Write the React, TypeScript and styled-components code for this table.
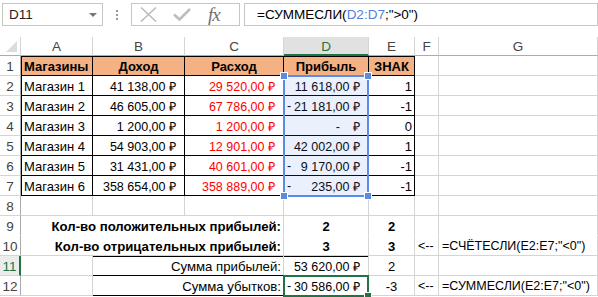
import React from 'react'
import styled, { createGlobalStyle } from 'styled-components'

const GRID = '#d4d4d4'
const INK = '#000'
const GREEN = '#217346'
const SEL = '#5b8be3'
const COLS_TEMPLATE = '21px 72px 92px 99px 85px 46px 24px 159px'
const ROWS_TEMPLATE = '19px repeat(12, 20px)'

const GlobalStyle = createGlobalStyle`
	html, body {
		margin: 0;
		padding: 0;
		background: #fff;
	}
	body {
		width: 598px;
		height: 297px;
		overflow: hidden;
		font-family: 'Liberation Sans', Arial, sans-serif;
		font-size: 12.5px;
		color: #000;
	}
`

const Page = styled.div`
	width: 598px;
	height: 297px;
	overflow: hidden;
`

const TopBar = styled.div`
	display: flex;
	align-items: center;
	height: 23px;
	padding: 3px 0 0 2px;
	margin-bottom: 11px;
`

const NameBox = styled.div`
	box-sizing: border-box;
	display: flex;
	align-items: center;
	justify-content: space-between;
	width: 101px;
	height: 23px;
	padding: 0 5px 0 6px;
	border: 1px solid #c6c6c6;
	font-size: 13.5px;
	color: #222;
`

const Caret = styled.span`
	width: 0;
	height: 0;
	border-left: 4px solid transparent;
	border-right: 4px solid transparent;
	border-top: 4px solid #777;
`

const Grip = styled.div`
	display: flex;
	flex-direction: column;
	gap: 2px;
	margin: 0 13px 0 13px;
	span {
		width: 2px;
		height: 2px;
		background: #9a9a9a;
	}
`

const ButtonBox = styled.div`
	box-sizing: border-box;
	display: flex;
	align-items: center;
	width: 109px;
	height: 23px;
	padding-left: 8px;
	gap: 16px;
	border: 1px solid #c6c6c6;
`

const FxLabel = styled.span`
	font-family: 'Liberation Serif', 'Times New Roman', serif;
	font-style: italic;
	font-size: 19px;
	color: #6f6f6f;
	letter-spacing: -1px;
	margin-left: 1px;
	line-height: 1;
`

const FormulaBox = styled.div`
	box-sizing: border-box;
	flex: 1;
	height: 23px;
	margin-left: 4px;
	padding-left: 12px;
	display: flex;
	align-items: center;
	border: 1px solid #c6c6c6;
	font-size: 13.5px;
	white-space: nowrap;
`

const Ref = styled.span`
	color: #4f81e0;
`

const SheetWrap = styled.div`
	position: relative;
`

const Sheet = styled.div`
	display: grid;
	grid-template-columns: ${COLS_TEMPLATE};
	grid-template-rows: ${ROWS_TEMPLATE};
`

// same grid laid over the sheet, holds only the selection frames
const OverlayLayer = styled.div`
	position: absolute;
	inset: 0;
	display: grid;
	grid-template-columns: ${COLS_TEMPLATE};
	grid-template-rows: ${ROWS_TEMPLATE};
	pointer-events: none;
`

const ColHead = styled.div<{ $active?: boolean }>`
	box-sizing: border-box;
	display: flex;
	align-items: center;
	justify-content: center;
	border-right: 1px solid ${GRID};
	border-bottom: ${(p) => (p.$active ? `2px solid ${GREEN}` : '1px solid #ababab')};
	background: ${(p) => (p.$active ? '#e1e1e1' : '#fff')};
	color: ${(p) => (p.$active ? GREEN : '#444')};
	font-size: 13.5px;
	padding-top: 1px;
`

const Corner = styled.div`
	box-sizing: border-box;
	position: relative;
	border-right: 1px solid ${GRID};
	border-bottom: 1px solid #ababab;
	&::after {
		content: '';
		position: absolute;
		right: 3px;
		bottom: 3px;
		width: 0;
		height: 0;
		border-left: 11px solid transparent;
		border-bottom: 11px solid #dcdcdc;
	}
`

const RowHead = styled.div<{ $active?: boolean; $noLine?: boolean }>`
	box-sizing: border-box;
	display: flex;
	align-items: center;
	justify-content: center;
	border-right: ${(p) => (p.$active ? `2px solid ${GREEN}` : `1px solid #ababab`)};
	border-bottom: 1px solid ${(p) => (p.$noLine ? '#fff' : GRID)};
	background: ${(p) => (p.$active ? '#ececec' : '#fff')};
	color: ${(p) => (p.$active ? GREEN : '#444')};
	font-size: 13.5px;
	padding-top: 1px;
`

type CellProps = {
	$align?: 'left' | 'center' | 'right' | 'between'
	$br?: string
	$bb?: string
	$bl?: boolean
	$bt?: boolean
	$fill?: string
	$color?: string
	$bold?: boolean
	$span?: number
	$pr?: number
	$size?: number
}

const Cell = styled.div<CellProps>`
	box-sizing: border-box;
	display: flex;
	align-items: center;
	justify-content: ${(p) =>
		p.$align === 'right'
			? 'flex-end'
			: p.$align === 'center'
			? 'center'
			: p.$align === 'between'
			? 'space-between'
			: 'flex-start'};
	grid-column: span ${(p) => p.$span || 1};
	padding: 1px ${(p) => (p.$pr === undefined ? 3 : p.$pr)}px 0 3px;
	border-right: 1px solid ${(p) => p.$br || GRID};
	border-bottom: 1px solid ${(p) => p.$bb || GRID};
	box-shadow: ${(p) =>
		[p.$bl ? `inset 1px 0 0 ${INK}` : '', p.$bt ? `inset 0 1px 0 ${INK}` : '']
			.filter(Boolean)
			.join(', ') || 'none'};
	background: ${(p) => p.$fill || 'transparent'};
	color: ${(p) => p.$color || '#000'};
	font-size: ${(p) => p.$size || 12.5}px;
	font-weight: ${(p) => (p.$bold ? 700 : 400)};
	white-space: nowrap;
	overflow: visible;
`

const Range = styled.div`
	grid-column: 5 / 6;
	grid-row: 3 / 9;
	position: relative;
	margin: -1px 0 -1px -1px;
	border: 2px solid ${SEL};
	background: rgba(80, 130, 230, 0.12);
`

const Active = styled.div`
	grid-column: 5 / 6;
	grid-row: 13 / 14;
	position: relative;
	margin: -1px 0 -1px -1px;
	border: 2px solid ${GREEN};
`

const Handle = styled.span<{ $x: 'l' | 'r'; $y: 't' | 'b'; $color: string }>`
	position: absolute;
	${(p) => (p.$x === 'l' ? 'left: -5px;' : 'right: -5px;')}
	${(p) => (p.$y === 't' ? 'top: -5px;' : 'bottom: -5px;')}
	width: 6px;
	height: 6px;
	background: ${(p) => p.$color};
	border: 1px solid #fff;
`

const Zero = styled.span`
	padding-right: 13px;
`

const ORANGE = '#f4b183'
const RED = '#ff0000'
const LABEL = 13.2

const rows = [
	['Магазин 1', '41 138,00 ₽', '29 520,00 ₽', '', '11 618,00 ₽', '1'],
	['Магазин 2', '46 605,00 ₽', '67 786,00 ₽', '-', '21 181,00 ₽', '-1'],
	['Магазин 3', '1 200,00 ₽', '1 200,00 ₽', '', 'zero', '0'],
	['Магазин 4', '54 903,00 ₽', '12 901,00 ₽', '', '42 002,00 ₽', '1'],
	['Магазин 5', '31 431,00 ₽', '40 601,00 ₽', '-', '9 170,00 ₽', '-1'],
	['Магазин 6', '358 654,00 ₽', '358 889,00 ₽', '-', '235,00 ₽', '-1'],
]

const Cols = ['A', 'B', 'C', 'D', 'E', 'F', 'G']

const XIcon = () => (
	<svg width="17" height="15" viewBox="0 0 17 15">
		<path d="M1 0.5 L16 14.5 M16 0.5 L1 14.5" stroke="#bdbdbd" strokeWidth="1.6" fill="none" />
	</svg>
)

const CheckIcon = () => (
	<svg width="18" height="13" viewBox="0 0 18 13">
		<path d="M1 6.5 L6.5 11.5 L17 1" stroke="#bdbdbd" strokeWidth="2.6" fill="none" />
	</svg>
)

export default function App() {
	return (
		<Page>
			<GlobalStyle />
			<TopBar>
				<NameBox>
					D11
					<Caret />
				</NameBox>
				<Grip>
					<span />
					<span />
					<span />
				</Grip>
				<ButtonBox>
					<XIcon />
					<CheckIcon />
					<FxLabel>fx</FxLabel>
				</ButtonBox>
				<FormulaBox>
					=СУММЕСЛИ(<Ref>D2:D7</Ref>;"&gt;0")
				</FormulaBox>
			</TopBar>

			<SheetWrap>
				<Sheet>
					<Corner />
					{Cols.map((c) => (
						<ColHead key={c} $active={c === 'D'}>
							{c}
						</ColHead>
					))}

					{/* row 1 – table head */}
					<RowHead>1</RowHead>
					<Cell $fill={ORANGE} $bold $br={INK} $bb={INK} $bl $bt $size={13}>
						Магазины
					</Cell>
					<Cell $fill={ORANGE} $bold $br={INK} $bb={INK} $bt $align="center" $size={13}>
						Доход
					</Cell>
					<Cell $fill={ORANGE} $bold $br={INK} $bb={INK} $bt $align="center" $size={13}>
						Расход
					</Cell>
					<Cell $fill={ORANGE} $bold $br={INK} $bb={INK} $bt $align="center" $size={13}>
						Прибыль
					</Cell>
					<Cell $fill={ORANGE} $bold $br={INK} $bb={INK} $bt $align="center" $size={13}>
						ЗНАК
					</Cell>
					<Cell />
					<Cell />

					{rows.map(([name, inc, exp, sign, profit, mark], i) => (
						<React.Fragment key={name}>
							<RowHead>{i + 2}</RowHead>
							<Cell $br={INK} $bb={INK} $bl $size={13}>
								{name}
							</Cell>
							<Cell $br={INK} $bb={INK} $align="right" $pr={8}>
								{inc}
							</Cell>
							<Cell $br={INK} $bb={INK} $align="right" $pr={8} $color={RED}>
								{exp}
							</Cell>
							<Cell $br={INK} $bb={INK} $align="between" $pr={8}>
								<span>{sign}</span>
								{profit === 'zero' ? (
									<span>
										<Zero>-</Zero>₽
									</span>
								) : (
									<span>{profit}</span>
								)}
							</Cell>
							<Cell $br={INK} $bb={INK} $align="right" $pr={2} $size={13}>
								{mark}
							</Cell>
							<Cell />
							<Cell />
						</React.Fragment>
					))}

					<RowHead>8</RowHead>
					<Cell />
					<Cell />
					<Cell />
					<Cell />
					<Cell />
					<Cell />
					<Cell />

					<RowHead $noLine>9</RowHead>
					<Cell $span={3} $bold $align="right" $bb="#fff" $pr={2} $size={LABEL}>
						Кол-во положительных прибылей:
					</Cell>
					<Cell $bold $align="center" $bb="#fff" $size={13}>
						2
					</Cell>
					<Cell $bold $align="center" $bb="#fff" $size={13}>
						2
					</Cell>
					<Cell $bb="#fff" />
					<Cell $bb="#fff" />

					<RowHead>10</RowHead>
					<Cell $span={3} $bold $align="right" $pr={2} $size={LABEL}>
						Кол-во отрицательных прибылей:
					</Cell>
					<Cell $bold $align="center" $size={13}>
						3
					</Cell>
					<Cell $bold $align="center" $size={13}>
						3
					</Cell>
					<Cell>&lt;--</Cell>
					<Cell>=СЧЁТЕСЛИ(E2:E7;"&lt;0")</Cell>

					<RowHead $active>11</RowHead>
					<Cell />
					<Cell $span={2} $align="right" $bt $bb={INK} $pr={2} $size={LABEL}>
						Сумма прибылей:
					</Cell>
					<Cell $align="between" $bt $bb={INK} $pr={8}>
						<span />
						<span>53 620,00 ₽</span>
					</Cell>
					<Cell $align="center" $size={13}>
						2
					</Cell>
					<Cell />
					<Cell />

					<RowHead>12</RowHead>
					<Cell />
					<Cell $span={2} $align="right" $bb={INK} $pr={2} $size={LABEL}>
						Сумма убытков:
					</Cell>
					<Cell $align="between" $bb={INK} $pr={8}>
						<span>-</span>
						<span>30 586,00 ₽</span>
					</Cell>
					<Cell $align="center" $size={13}>
						-3
					</Cell>
					<Cell>&lt;--</Cell>
					<Cell>=СУММЕСЛИ(E2:E7;"&lt;0")</Cell>
				</Sheet>

				<OverlayLayer>
					<Range>
						<Handle $x="l" $y="t" $color={SEL} />
						<Handle $x="r" $y="t" $color={SEL} />
						<Handle $x="l" $y="b" $color={SEL} />
						<Handle $x="r" $y="b" $color={SEL} />
					</Range>
					<Active>
						<Handle $x="r" $y="b" $color={GREEN} />
					</Active>
				</OverlayLayer>
			</SheetWrap>
		</Page>
	)
}
